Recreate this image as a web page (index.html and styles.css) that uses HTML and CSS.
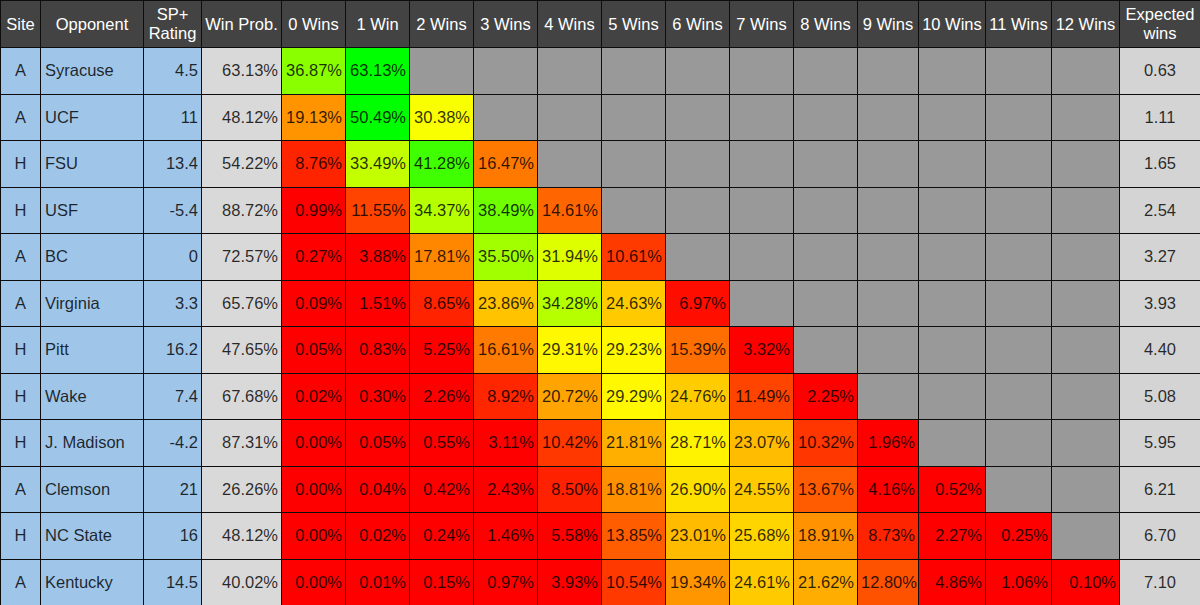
FILE: index.html
```html
<!DOCTYPE html>
<html>
<head>
<meta charset="utf-8">
<link rel="stylesheet" href="styles.css">
</head>
<body>
<table class="sched">
<colgroup>
<col class="c-site"><col class="c-opp"><col class="c-sp"><col class="c-wp">
<col class="c-w"><col class="c-w"><col class="c-w"><col class="c-w"><col class="c-w"><col class="c-w"><col class="c-w"><col class="c-w"><col class="c-w">
<col class="c-w9"><col class="c-w10"><col class="c-w11"><col class="c-w12"><col class="c-exp">
</colgroup>
<thead>
<tr><th>Site</th><th>Opponent</th><th class="two">SP+<br>Rating</th><th>Win Prob.</th><th>0 Wins</th><th>1 Win</th><th>2 Wins</th><th>3 Wins</th><th>4 Wins</th><th>5 Wins</th><th>6 Wins</th><th>7 Wins</th><th>8 Wins</th><th>9 Wins</th><th>10 Wins</th><th>11 Wins</th><th>12 Wins</th><th class="two">Expected<br>wins</th></tr>
</thead>
<tbody id="rows"></tbody>
</table>
<script src="script.js"></script>
</body>
</html>
```
FILE: styles.css
```css
html, body { margin: 0; padding: 0; background: #ffffff; }
.sched {
  border-collapse: collapse;
  table-layout: fixed;
  width: 1200px;
  font-family: "Liberation Sans", Arial, sans-serif;
  font-size: 16.5px;
}
.c-site { width: 40px; }
.c-opp { width: 103px; }
.c-sp { width: 58px; }
.c-wp { width: 80px; }
.c-w { width: 64px; }
.c-w9 { width: 61px; }
.c-w10 { width: 67px; }
.c-w11 { width: 66px; }
.c-w12 { width: 68px; }
.c-exp { width: 81px; }
.sched th, .sched td {
  border: 1px solid #0d0d0d;
  padding: 0 3px;
  white-space: nowrap;
  overflow: hidden;
}
.sched th {
  background: #434343;
  color: #ffffff;
  font-weight: normal;
  text-align: center;
  height: 46px;
  line-height: 19px;
  padding: 0;
}
.sched td {
  height: 45.5px;
  color: rgba(0, 0, 0, 0.82);
  text-align: right;
}
.sched td.site { background: #9fc5e8; text-align: center; }
.sched td.opp { background: #9fc5e8; text-align: left; padding-left: 4px; }
.sched td.sp { background: #9fc5e8; }
.sched td.wp { background: #d9d9d9; }
.sched td.na { background: #999999; }
.sched td.exp { background: #d4d4d4; text-align: center; }
```
FILE: script.js
```js
var data = [
  ["A","Syracuse","4.5","63.13%",["36.87%","63.13%"],"0.63"],
  ["A","UCF","11","48.12%",["19.13%","50.49%","30.38%"],"1.11"],
  ["H","FSU","13.4","54.22%",["8.76%","33.49%","41.28%","16.47%"],"1.65"],
  ["H","USF","-5.4","88.72%",["0.99%","11.55%","34.37%","38.49%","14.61%"],"2.54"],
  ["A","BC","0","72.57%",["0.27%","3.88%","17.81%","35.50%","31.94%","10.61%"],"3.27"],
  ["A","Virginia","3.3","65.76%",["0.09%","1.51%","8.65%","23.86%","34.28%","24.63%","6.97%"],"3.93"],
  ["H","Pitt","16.2","47.65%",["0.05%","0.83%","5.25%","16.61%","29.31%","29.23%","15.39%","3.32%"],"4.40"],
  ["H","Wake","7.4","67.68%",["0.02%","0.30%","2.26%","8.92%","20.72%","29.29%","24.76%","11.49%","2.25%"],"5.08"],
  ["H","J. Madison","-4.2","87.31%",["0.00%","0.05%","0.55%","3.11%","10.42%","21.81%","28.71%","23.07%","10.32%","1.96%"],"5.95"],
  ["A","Clemson","21","26.26%",["0.00%","0.04%","0.42%","2.43%","8.50%","18.81%","26.90%","24.55%","13.67%","4.16%","0.52%"],"6.21"],
  ["H","NC State","16","48.12%",["0.00%","0.02%","0.24%","1.46%","5.58%","13.85%","23.01%","25.68%","18.91%","8.73%","2.27%","0.25%"],"6.70"],
  ["A","Kentucky","14.5","40.02%",["0.00%","0.01%","0.15%","0.97%","3.93%","10.54%","19.34%","24.61%","21.62%","12.80%","4.86%","1.06%","0.10%"],"7.10"]
];

function scaleColor(v) {
  var r = 255, g = 0;
  if (v <= 6) { r = 255; g = 0; }
  else if (v <= 30) { r = 255; g = Math.round(Math.pow((v - 6) / 24, 0.9) * 255); }
  else if (v <= 45) { r = Math.round(255 * (1 - (v - 30) / 15)); g = 255; }
  else { r = 0; g = 255; }
  return "rgb(" + r + "," + g + ",0)";
}

var body = document.getElementById("rows");
data.forEach(function (row) {
  var tr = document.createElement("tr");
  function cell(cls, text) {
    var td = document.createElement("td");
    td.className = cls;
    td.textContent = text;
    tr.appendChild(td);
    return td;
  }
  cell("site", row[0]);
  cell("opp", row[1]);
  cell("sp", row[2]);
  cell("wp", row[3]);
  for (var i = 0; i < 13; i++) {
    if (i < row[4].length) {
      var td = cell("p", row[4][i]);
      td.style.backgroundColor = scaleColor(parseFloat(row[4][i]));
    } else {
      cell("na", "");
    }
  }
  cell("exp", row[5]);
  body.appendChild(tr);
});
```
